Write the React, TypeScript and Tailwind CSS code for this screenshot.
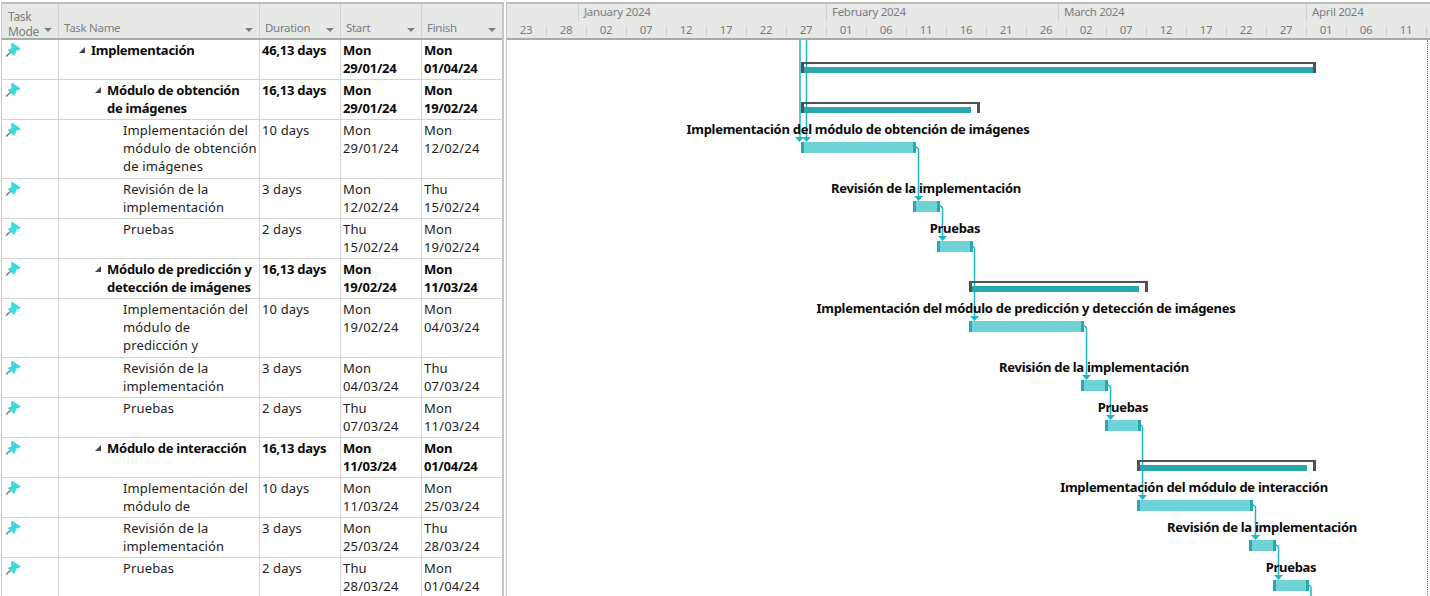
const font = { fontFamily: '"Noto Sans", "Open Sans", sans-serif' };

type Row = { h: string; level: 0 | 1 | 2; name: string[]; dur: string; start: string[]; finish: string[] };
const rows: Row[] = [
  { h: 'h-10', level: 0, name: ['Implementación'], dur: '46,13 days', start: ['Mon', '29/01/24'], finish: ['Mon', '01/04/24'] },
  { h: 'h-10', level: 1, name: ['Módulo de obtención', 'de imágenes'], dur: '16,13 days', start: ['Mon', '29/01/24'], finish: ['Mon', '19/02/24'] },
  { h: 'h-[59px]', level: 2, name: ['Implementación del', 'módulo de obtención', 'de imágenes'], dur: '10 days', start: ['Mon', '29/01/24'], finish: ['Mon', '12/02/24'] },
  { h: 'h-10', level: 2, name: ['Revisión de la', 'implementación'], dur: '3 days', start: ['Mon', '12/02/24'], finish: ['Thu', '15/02/24'] },
  { h: 'h-10', level: 2, name: ['Pruebas'], dur: '2 days', start: ['Thu', '15/02/24'], finish: ['Mon', '19/02/24'] },
  { h: 'h-10', level: 1, name: ['Módulo de predicción y', 'detección de imágenes'], dur: '16,13 days', start: ['Mon', '19/02/24'], finish: ['Mon', '11/03/24'] },
  { h: 'h-[59px]', level: 2, name: ['Implementación del', 'módulo de', 'predicción y'], dur: '10 days', start: ['Mon', '19/02/24'], finish: ['Mon', '04/03/24'] },
  { h: 'h-10', level: 2, name: ['Revisión de la', 'implementación'], dur: '3 days', start: ['Mon', '04/03/24'], finish: ['Thu', '07/03/24'] },
  { h: 'h-10', level: 2, name: ['Pruebas'], dur: '2 days', start: ['Thu', '07/03/24'], finish: ['Mon', '11/03/24'] },
  { h: 'h-10', level: 1, name: ['Módulo de interacción'], dur: '16,13 days', start: ['Mon', '11/03/24'], finish: ['Mon', '01/04/24'] },
  { h: 'h-10', level: 2, name: ['Implementación del', 'módulo de'], dur: '10 days', start: ['Mon', '11/03/24'], finish: ['Mon', '25/03/24'] },
  { h: 'h-10', level: 2, name: ['Revisión de la', 'implementación'], dur: '3 days', start: ['Mon', '25/03/24'], finish: ['Thu', '28/03/24'] },
  { h: 'h-10', level: 2, name: ['Pruebas'], dur: '2 days', start: ['Thu', '28/03/24'], finish: ['Mon', '01/04/24'] },
];

function Pin() {
  return (
    <svg width="16" height="17" viewBox="0 0 16 17" className="ml-[3px] mt-[1px]">
      <path d="M1 15.5 L6 11" stroke="#77797c" strokeWidth="1.5" />
      <path d="M7 1.5 L15.5 7.5 L13.6 9.4 L11.8 9 L9.4 15 L2.5 9 L6.6 7.2 L6 4 Z" fill="#3fd9dc" />
    </svg>
  );
}

function Caret() {
  return (
    <svg width="6" height="6" viewBox="0 0 6 6" className="shrink-0 mt-[6px]">
      <path d="M6 0 V6 H0 Z" fill="#44464a" />
    </svg>
  );
}

function HeadCaret() {
  return <span className="absolute right-[6px] bottom-[6px] w-0 h-0 border-x-[4px] border-x-transparent border-t-[4px] border-t-[#7c7f86]" />;
}

function Lines({ l }: { l: string[] }) {
  return <>{l.map((t, i) => <div key={i}>{t}</div>)}</>;
}

function TableRow({ r }: { r: Row }) {
  const bold = r.level < 2;
  const pad = r.level === 0 ? 'pl-[20px]' : r.level === 1 ? 'pl-[36px]' : 'pl-[64px]';
  return (
    <div className={`flex ${r.h} border-b border-[#d4d4d4] text-[13px] leading-[18px] ${bold ? 'font-bold tracking-[-0.25px] text-[#0a0a0a]' : 'tracking-[0.15px] text-[#1c1c1c]'}`}>
      <div className="w-[57px] shrink-0 border-r border-[#d4d4d4]"><Pin /></div>
      <div className={`w-[201px] shrink-0 border-r border-[#d4d4d4] pt-[1px] flex gap-[6px] overflow-hidden ${pad}`}>
        {r.level < 2 && <Caret />}
        <div className="whitespace-nowrap"><Lines l={r.name} /></div>
      </div>
      <div className="w-[81px] shrink-0 border-r border-[#d4d4d4] pt-[1px] pl-[2px] whitespace-nowrap">{r.dur}</div>
      <div className="w-[81px] shrink-0 border-r border-[#d4d4d4] pt-[1px] pl-[2px]"><Lines l={r.start} /></div>
      <div className="w-[80px] shrink-0 pt-[1px] pl-[2px]"><Lines l={r.finish} /></div>
    </div>
  );
}

function Task({ x0, x1, y }: { x0: number; x1: number; y: number }) {
  return (
    <div className="absolute h-[11px] bg-[#6fd2d6] border-x-[3px] border-x-[#2ba7ae]" style={{ left: x0 - 507, width: x1 - x0, top: y - 40 }} />
  );
}

function Summary({ x0, x1, y }: { x0: number; x1: number; y: number }) {
  return (
    <div className="absolute h-[11px] border-x-[3px] border-t-2 border-[#4f5254]" style={{ left: x0 - 507, width: x1 - x0, top: y - 40 }}>
      <div className="absolute left-0 top-[3px] h-[6px] bg-[#2ba7ae]" style={{ width: x1 - x0 - (x1 - x0 > 400 ? 6 : 12) }} />
    </div>
  );
}

function Label({ t, cx, y }: { t: string; cx: number; y: number }) {
  return (
    <div className="absolute -translate-x-1/2 whitespace-nowrap font-bold text-[13px] leading-[18px] tracking-[-0.28px] text-[#0a0a0a]" style={{ left: cx - 507, top: y - 40 }}>{t}</div>
  );
}

const tasks = [
  [801, 916, 142], [913, 940, 201], [937, 973, 241],
  [969, 1084, 321], [1081, 1108, 380], [1105, 1141, 420],
  [1137, 1253, 500], [1249, 1276, 540], [1273, 1309, 580],
];
const summaries = [[801, 1316, 62], [801, 980, 102], [969, 1148, 281], [1137, 1316, 460]];
const labels: [string, number, number][] = [
  ['Implementación del módulo de obtención de imágenes', 858, 120],
  ['Revisión de la implementación', 926, 179],
  ['Pruebas', 955, 219],
  ['Implementación del módulo de predicción y detección de imágenes', 1026, 299],
  ['Revisión de la implementación', 1094, 358],
  ['Pruebas', 1123, 398],
  ['Implementación del módulo de interacción', 1194, 478],
  ['Revisión de la implementación', 1262, 518],
  ['Pruebas', 1291, 558],
];

const arrows = [
  [916, 147, 918.5, 196], [940, 206, 942.5, 236], [973, 246, 974.5, 316],
  [1084, 326, 1086.5, 375], [1108, 385, 1110.5, 415], [1141, 425, 1142.5, 495],
  [1253, 505, 1255.5, 535], [1276, 545, 1278.5, 575], [1309, 585, 1311, 597],
];

const days = ['23', '28', '02', '07', '12', '17', '22', '27', '01', '06', '11', '16', '21', '26', '02', '07', '12', '17', '22', '27', '01', '06', '11'];
const months = [
  { t: 'January 2024', w: 'w-[248px] border-r' },
  { t: 'February 2024', w: 'w-[232px] border-r' },
  { t: 'March 2024', w: 'w-[248px] border-r' },
  { t: 'April 2024', w: 'w-[124px]' },
];

const headText = 'text-[11.5px] leading-[15px] tracking-[-0.3px] text-[#7b7d85]';

export default function App() {
  return (
    <div className="w-[1430px] h-[596px] overflow-hidden bg-white pt-[2px] flex" style={font}>
      <div className="w-[501px] ml-[1px] shrink-0 border-l border-[#c9c9c9] flex flex-col">
        <div className={`flex h-[38px] shrink-0 bg-[#e6e9e5] border-y-2 border-t-[#bcbfbc] border-b-[#a9aba9] ${headText}`}>
          <div className="relative w-[57px] shrink-0 border-r border-[#d0d3d0] pl-[6px] pt-[5px] text-[12px]"><div>Task</div><div>Mode</div><HeadCaret /></div>
          <div className="relative w-[201px] shrink-0 border-r border-[#d0d3d0] pl-[5px] pt-[16px]">Task Name<HeadCaret /></div>
          <div className="relative w-[81px] shrink-0 border-r border-[#d0d3d0] pl-[5px] pt-[16px]">Duration<HeadCaret /></div>
          <div className="relative w-[81px] shrink-0 border-r border-[#d0d3d0] pl-[5px] pt-[16px]">Start<HeadCaret /></div>
          <div className="relative w-[80px] shrink-0 pl-[5px] pt-[16px]">Finish<HeadCaret /></div>
        </div>
        <div>{rows.map((r, i) => <TableRow key={i} r={r} />)}</div>
      </div>
      <div className="w-[2px] shrink-0 bg-[#c4c6c4]" />
      <div className="w-[3px] shrink-0 bg-white border-r border-[#c4c6c4]" />
      <div className="flex-1 min-w-0 flex flex-col">
        <div className={`h-[38px] shrink-0 bg-[#e6e9e5] border-y-2 border-t-[#bcbfbc] border-b-[#a9aba9] overflow-hidden ${headText}`}>
          <div className="flex h-[18px]">
            <div className="w-[72px] shrink-0 border-r border-[#d0d3d0]" />
            {months.map((m) => (
              <div key={m.t} className={`${m.w} shrink-0 border-[#d0d3d0] pl-[5px] whitespace-nowrap`}>{m.t}</div>
            ))}
          </div>
          <div className="flex h-[15px]">
            {days.map((d, i) => (
              <div key={i} className="relative w-10 shrink-0 text-center pr-[2px]">
                {d}
                <span className="absolute right-0 top-[4px] bottom-0 w-px bg-[#d0d3d0]" />
              </div>
            ))}
          </div>
        </div>
        <div className="relative flex-1">
          <div className="absolute left-[920px] top-0 bottom-0 border-l border-dotted border-[#777]" />
          <svg className="absolute left-0 top-0" width="923" height="556" viewBox="507 40 923 556" fill="none">
            <path d="M800 40 V138 M806.5 40 V138" stroke="#1fb5c2" strokeWidth="1.5" />
            <path d="M795 137 H804 L799.5 142 Z M802 137 H811 L806.5 142 Z" fill="#1fb5c2" />
            {arrows.map(([a, b, c, d], i) => (
              <g key={i}>
                <path d={`M${a} ${b} H${c - 2} L${c} ${b + 2} V${d}`} stroke="#1fb5c2" strokeWidth="1.5" />
                <path d={`M${c - 4.5} ${d} H${c + 4.5} L${c} ${d + 5} Z`} fill="#1fb5c2" />
              </g>
            ))}
          </svg>
          {summaries.map(([a, b, c]) => <Summary key={`${a}${b}`} x0={a} x1={b} y={c} />)}
          {tasks.map(([a, b, c]) => <Task key={a} x0={a} x1={b} y={c} />)}
          {labels.map(([t, cx, y]) => <Label key={y} t={t} cx={cx} y={y} />)}
        </div>
      </div>
    </div>
  );
}
